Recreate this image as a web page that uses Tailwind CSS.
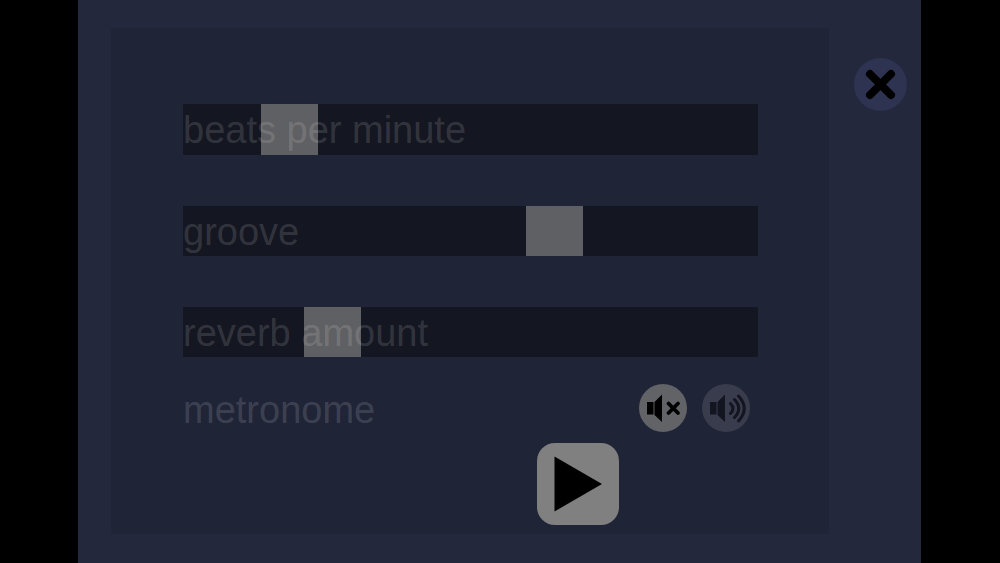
<!DOCTYPE html>
<html lang="en">
<head>
<meta charset="utf-8">
<meta name="viewport" content="width=device-width, initial-scale=1">
<title>Settings</title>
<script src="https://cdn.jsdelivr.net/npm/@tailwindcss/browser@4"></script>
</head>
<body class="min-h-screen bg-black pl-[78px] pr-[79px] font-['Liberation_Sans',Arial,sans-serif]">
<main class="flex min-h-screen items-start gap-[25px] bg-[#23283d] pt-7 pr-3.5 pb-7 pl-[33px]">
  <section class="flex min-w-0 flex-1 flex-col bg-[#202437] pt-[76px] pr-[71px] pb-[9px] pl-[72px]">
    <div class="flex flex-col gap-[51px]">
      <div class="relative h-[51px]">
        <input id="bpm" type="range" min="0" max="518" value="78" class="block h-full w-full appearance-none bg-[#141621] [&::-webkit-slider-thumb]:h-[51px] [&::-webkit-slider-thumb]:w-[57px] [&::-webkit-slider-thumb]:appearance-none [&::-webkit-slider-thumb]:bg-[#5f6063]">
        <label for="bpm" class="pointer-events-none absolute top-0 left-0 text-[38px] leading-[52px] whitespace-nowrap text-white/15">beats per minute</label>
      </div>
      <div class="relative h-[50px]">
        <input id="groove" type="range" min="0" max="518" value="343" class="block h-full w-full appearance-none bg-[#141621] [&::-webkit-slider-thumb]:h-[50px] [&::-webkit-slider-thumb]:w-[57px] [&::-webkit-slider-thumb]:appearance-none [&::-webkit-slider-thumb]:bg-[#5f6063]">
        <label for="groove" class="pointer-events-none absolute top-0 left-0 text-[38px] leading-[52px] whitespace-nowrap text-white/15">groove</label>
      </div>
      <div class="relative h-[50px]">
        <input id="reverb" type="range" min="0" max="518" value="121" class="block h-full w-full appearance-none bg-[#141621] [&::-webkit-slider-thumb]:h-[50px] [&::-webkit-slider-thumb]:w-[57px] [&::-webkit-slider-thumb]:appearance-none [&::-webkit-slider-thumb]:bg-[#5f6063]">
        <label for="reverb" class="pointer-events-none absolute top-0 left-0 text-[38px] leading-[52px] whitespace-nowrap text-white/15">reverb amount</label>
      </div>
    </div>
    <div class="mt-[27px] flex h-[50px] items-start justify-between pr-2" role="group" aria-labelledby="metronome">
      <span id="metronome" class="text-[38px] leading-[52px] text-white/15">metronome</span>
      <div class="flex gap-[15px]">
        <button type="button" aria-label="Metronome off" aria-pressed="true" class="size-12 rounded-full bg-[#626367]">
          <svg viewBox="0 0 48 48" class="size-12" aria-hidden="true">
            <path d="M8 18H14.500V30.500H8ZM15.500 18L23 10.500V38L15.500 31Z"/>
            <path d="M29.500 19.500L39 29M39 19.500L29.500 29" fill="none" stroke="#000" stroke-width="3.800" stroke-linecap="round"/>
          </svg>
        </button>
        <button type="button" aria-label="Metronome on" aria-pressed="false" class="size-12 rounded-full bg-[#393c4c]">
          <svg viewBox="0 0 48 48" class="size-12" aria-hidden="true">
            <path d="M8 18H14.500V30.500H8ZM15.500 18L23 10.500V38L15.500 31Z" fill="#131521"/>
            <path d="M28.500 19.500Q33.500 24.500 28.500 29.500M32.500 15.500Q41 24.500 32.500 33.500M36.500 12Q48 24.500 36.500 37" fill="none" stroke="#131521" stroke-width="3" stroke-linecap="round"/>
          </svg>
        </button>
      </div>
    </div>
    <button type="button" aria-label="Play" class="mt-[9px] mr-[139px] size-[82px] self-end rounded-[18px] bg-[#808080]">
      <svg viewBox="0 0 82 82" class="size-full" aria-hidden="true"><path d="M17.500 13.500L65 41L17.500 68.500Z"/></svg>
    </button>
  </section>
  <button type="button" aria-label="Close" class="mt-[30px] size-[53px] shrink-0 rounded-full bg-[#2d3350]">
    <svg viewBox="0 0 53 53" class="size-full" aria-hidden="true"><path d="M16 16L37 37M37 16L16 37" stroke="#000" stroke-width="8" stroke-linecap="round"/></svg>
  </button>
</main>
</body>
</html>
